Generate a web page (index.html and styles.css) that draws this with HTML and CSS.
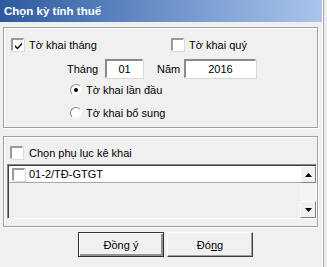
FILE: index.html
```html
<!DOCTYPE html>
<html>
<head>
<meta charset="utf-8">
<link rel="stylesheet" href="styles.css">
</head>
<body>
<div class="window">
  <div class="titlebar">Chọn kỳ tính thuế</div>

  <div class="group group-period">
    <div class="row row-kind">
      <label class="opt opt-month"><span class="check checked"><svg viewBox="0 0 9 9" width="9" height="9"><path d="M1 4 L3.5 6.5 L8 1.5 L8 3.5 L3.5 8.5 L1 6 Z" fill="#000"/></svg></span>Tờ khai tháng</label>
      <label class="opt"><span class="check"></span>Tờ khai quý</label>
    </div>
    <div class="row row-date">
      <span class="lbl lbl-month">Tháng</span>
      <span class="field field-month">01</span>
      <span class="lbl lbl-year">Năm</span>
      <span class="field field-year">2016</span>
    </div>
    <div class="row row-radio first">
      <span class="radio selected"><span class="dot"></span></span>Tờ khai lần đầu
    </div>
    <div class="row row-radio second">
      <span class="radio"></span>Tờ khai bổ sung
    </div>
  </div>

  <div class="group group-annex">
    <label class="opt opt-annex"><span class="check"></span>Chọn phụ lục kê khai</label>
    <div class="listbox">
      <div class="list-items">
        <div class="item"><span class="check"></span>01-2/TĐ-GTGT</div>
      </div>
      <div class="scrollbar">
        <div class="sb-btn"><svg width="7" height="4" viewBox="0 0 7 4"><path d="M3.5 0 L7 4 L0 4 Z" fill="#000"/></svg></div>
        <div class="sb-track"></div>
        <div class="sb-btn"><svg width="7" height="4" viewBox="0 0 7 4"><path d="M0 0 L7 0 L3.5 4 Z" fill="#000"/></svg></div>
      </div>
    </div>
  </div>

  <div class="buttons">
    <button class="btn btn-default">Đồng ý</button>
    <button class="btn">Đó<u>n</u>g</button>
  </div>
</div>
</body>
</html>
```

FILE: styles.css
```css
html, body {
  margin: 0;
  padding: 0;
  background: #ececec;
}
body {
  font-family: "Liberation Sans", Arial, sans-serif;
  font-size: 11px;
  color: #000;
}
.window {
  width: 322px;
  height: 267px;
  background: #f0f0f0;
  border-right: 1px solid #ffffff;
  box-shadow: 1px 0 0 #a8a8a8;
  overflow: hidden;
}
.titlebar {
  height: 22px;
  line-height: 22px;
  padding-left: 4px;
  background: linear-gradient(90deg, #2d5a9d 0%, #5f86c2 40%, #a9c5eb 100%);
  color: #fff;
  font-weight: bold;
  font-size: 11.5px;
}
.group {
  box-sizing: border-box;
  margin-left: 3px;
  width: 315px;
  border: 1px solid #a0a0a0;
  box-shadow: inset 1px 1px 0 #fff, 1px 1px 0 #fff;
}
.group-period {
  margin-top: 5px;
  height: 101px;
  padding-top: 10px;
}
.row {
  display: flex;
  align-items: center;
}
.row-kind {
  height: 13px;
  padding-left: 7px;
}
.opt {
  display: flex;
  align-items: center;
  white-space: nowrap;
}
.opt-month {
  width: 160px;
}
.check {
  box-sizing: border-box;
  width: 13px;
  height: 13px;
  margin-right: 5px;
  background: #fff;
  border-top: 2px solid #9a9a9a;
  border-left: 2px solid #9a9a9a;
  border-right: 1px solid #fff;
  border-bottom: 1px solid #fff;
  box-shadow: 1px 1px 0 #dcdcdc;
  display: flex;
  align-items: center;
  justify-content: center;
  flex: none;
}
.row-date {
  margin-top: 8px;
  height: 19px;
  padding-left: 63px;
}
.lbl-month {
  width: 38px;
}
.lbl-year {
  margin-left: 14px;
  width: 27px;
}
.field {
  box-sizing: border-box;
  height: 19px;
  background: #fff;
  border-top: 2px solid #8a8a8a;
  border-left: 2px solid #8a8a8a;
  border-right: 1px solid #fff;
  border-bottom: 1px solid #fff;
  box-shadow: 1px 1px 0 #d8d8d8;
  display: flex;
  align-items: center;
  justify-content: center;
}
.field-month {
  width: 38px;
}
.field-year {
  width: 72px;
}
.row-radio {
  height: 16px;
  padding-left: 66px;
}
.row-radio.first {
  margin-top: 4px;
}
.row-radio.second {
  margin-top: 7px;
}
.radio {
  box-sizing: border-box;
  width: 12px;
  height: 12px;
  border-radius: 50%;
  background: #fff;
  border: 1px solid;
  border-color: #8a8a8a #f4f4f4 #f4f4f4 #8a8a8a;
  margin-right: 4px;
  display: flex;
  align-items: center;
  justify-content: center;
  flex: none;
}
.dot {
  width: 4px;
  height: 4px;
  border-radius: 50%;
  background: #000;
}
.group-annex {
  margin-top: 8px;
  height: 91px;
  padding-top: 9px;
}
.opt-annex {
  height: 13px;
  padding-left: 6px;
}
.opt-annex .check {
  margin-right: 6px;
}
.listbox {
  box-sizing: border-box;
  margin-top: 5px;
  margin-left: 3px;
  width: 310px;
  height: 55px;
  display: flex;
  border-top: 1px solid #888;
  border-left: 1px solid #888;
  border-right: 1px solid #fff;
  border-bottom: 1px solid #fff;
  box-shadow: inset 1px 1px 0 #404040;
  padding: 1px 0 0 1px;
  background: #f0f0f0;
}
.list-items {
  flex: 1;
}
.item {
  height: 16px;
  background: #fff;
  border-bottom: 1px solid #a8a8a8;
  display: flex;
  align-items: center;
  padding-left: 3px;
}
.item .check {
  margin-right: 4px;
}
.scrollbar {
  width: 16px;
  display: flex;
  flex-direction: column;
}
.sb-btn {
  box-sizing: border-box;
  height: 17px;
  background: #f0f0f0;
  border-top: 1px solid #fff;
  border-left: 1px solid #fff;
  border-right: 1px solid #808080;
  border-bottom: 1px solid #808080;
  display: flex;
  align-items: center;
  justify-content: center;
}
.sb-track {
  flex: 1;
  background: #f4f4f4;
}
.buttons {
  display: flex;
  gap: 3px;
  padding-left: 78px;
  margin-top: 5px;
}
.btn {
  box-sizing: border-box;
  width: 86px;
  height: 25px;
  font-family: "Liberation Sans", Arial, sans-serif;
  font-size: 11px;
  color: #000;
  background: #f0f0f0;
  border: 1px solid;
  border-color: #fff #404040 #404040 #fff;
  box-shadow: inset -1px -1px 0 #a0a0a0;
  padding: 0;
}
.btn-default {
  border: 1px solid #303030;
  box-shadow: inset 1px 1px 0 #fff, inset -2px -2px 0 #909090;
}
.btn u {
  text-decoration: underline;
}
```
